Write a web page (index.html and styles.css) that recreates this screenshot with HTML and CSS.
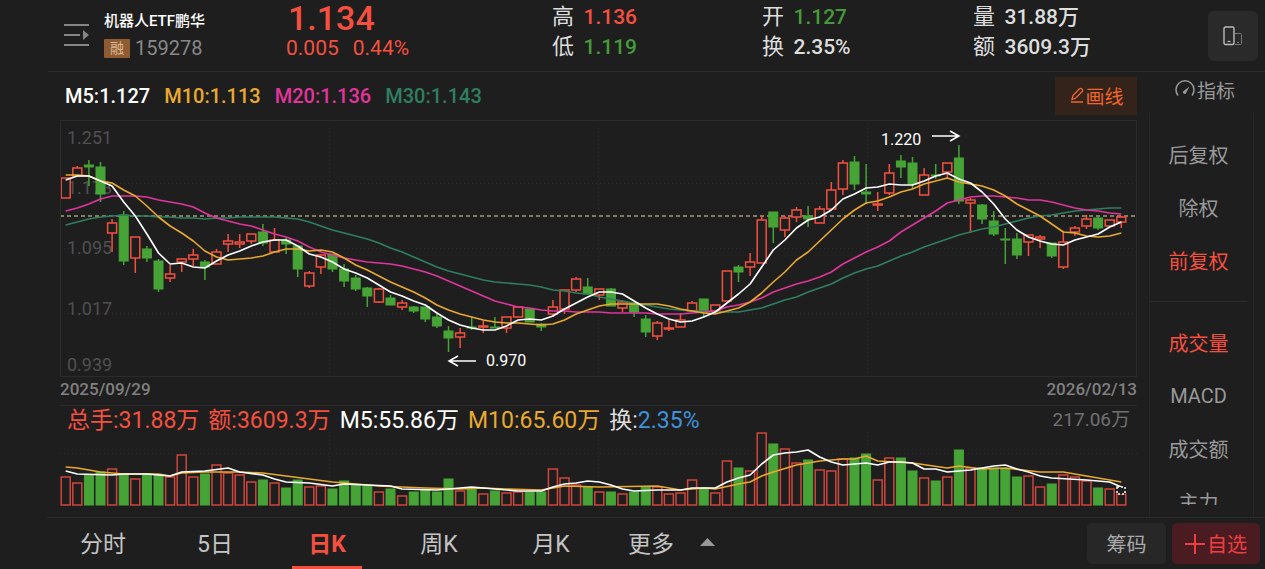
FILE: index.html
```html
<!DOCTYPE html>
<html lang="zh-CN">
  <head>
    <meta charset="UTF-8" />
    <meta name="viewport" content="width=device-width, initial-scale=1.0" />
    <title>机器人ETF鹏华 159278</title>
    <link rel="stylesheet" href="styles.css">
  </head>
  <body>
    <header class="quote">
      <div class="stock">
        <button class="icon-btn" aria-label="列表">
          <svg width="26" height="22" viewBox="0 0 26 22" fill="none" stroke="#858585" stroke-width="2">
            <path d="M0 1h25M0 11h16M0 21h25" />
            <path d="M19 6l6 5-6 5z" fill="#858585" stroke="none" />
          </svg>
        </button>
        <div>
          <h1>机器人ETF鹏华</h1>
          <div class="code"><span class="badge">融</span>159278</div>
        </div>
      </div>
      <div class="price up">
        <div class="last">1.134</div>
        <div class="change"><span>0.005</span><span>0.44%</span></div>
      </div>
      <div class="stat">
        <div>高 <b class="up">1.136</b></div>
        <div>低 <b class="down">1.119</b></div>
      </div>
      <div class="stat">
        <div>开 <b class="down">1.127</b></div>
        <div>换 <b>2.35%</b></div>
      </div>
      <div class="stat">
        <div>量 <b>31.88万</b></div>
        <div>额 <b>3609.3万</b></div>
      </div>
      <button class="rotate-btn" aria-label="切换竖屏">
        <svg width="20" height="20" viewBox="0 0 20 20" fill="none">
          <path d="M12 7.500h5.500a1 1 0 0 1 1 1v9a1 1 0 0 1-1 1H12M14 16.500h2" stroke="#777" />
          <rect x="1" y="1" width="10" height="17.500" rx="1.500" stroke="#bbb" stroke-width="1.400" />
          <path d="M4.500 15.500h3" stroke="#bbb" stroke-width="1.200" />
        </svg>
      </button>
    </header>

    <main>
      <section class="charts">
        <div class="ma-row">
          <span class="m5">M5:1.127</span>
          <span class="m10">M10:1.113</span>
          <span class="m20">M20:1.136</span>
          <span class="m30">M30:1.143</span>
          <button class="draw-btn">
            <svg width="15" height="16" viewBox="0 0 15 16" fill="none" stroke="currentColor" stroke-width="1.300">
              <path d="M2 12.500l.8-3.800L9.500 1.800a1.500 1.500 0 0 1 2.200 0l.5.500a1.500 1.500 0 0 1 0 2.200L5.500 11.300zM1 15h12" />
            </svg>画线
          </button>
        </div>
        <svg id="price-chart" class="panel" viewBox="60 120 1077 257"></svg>
        <div class="dates">
          <span>2025/09/29</span>
          <span>2026/02/13</span>
        </div>
        <div class="volume">
          <div class="volume-row">
            <span class="up">总手:31.88万</span>
            <span class="up">额:3609.3万</span>
            <span class="m5">M5:55.86万</span>
            <span class="m10">M10:65.60万</span>
            <span>换:<span class="rate">2.35%</span></span>
            <span class="volume-max">217.06万</span>
          </div>
          <svg id="volume-chart" viewBox="60 432 1077 74"></svg>
        </div>
      </section>

      <aside class="sidebar">
        <button class="indicator-btn">
          <svg width="22" height="18" viewBox="0 0 22 18" fill="none" stroke="currentColor" stroke-width="1.500">
            <path d="M4 15.500A9 9 0 1 1 18 15.500" />
            <path d="M9.300 11.300L15.500 6.500l-3.700 6.900a1.600 1.600 0 1 1-2.500-2.100z" fill="currentColor" stroke="none" />
          </svg>指标
        </button>
        <div class="indicators">
          <div class="indicator-list">
            <button>后复权</button>
            <button>除权</button>
            <button class="active">前复权</button>
            <hr />
            <button class="active">成交量</button>
            <button>MACD</button>
            <button>成交额</button>
            <button>主力</button>
          </div>
        </div>
      </aside>
    </main>

    <footer>
      <nav class="tabs">
        <button>分时</button>
        <button>5日</button>
        <button class="active">日K</button>
        <button>周K</button>
        <button>月K</button>
        <button class="more">更多
          <svg width="15" height="8" viewBox="0 0 15 8"><path d="M0 8L7.500 0 15 8z" fill="#999" /></svg>
        </button>
      </nav>
      <button class="chip-btn">筹码</button>
      <button class="add-btn">
        <svg width="20" height="20" viewBox="0 0 20 20" stroke="currentColor" stroke-width="2"><path d="M0 10h20M10 0v20" /></svg>自选
      </button>
    </footer>

    <script src="chart.js"></script>
  </body>
</html>
```
FILE: styles.css
```css
* {
  margin: 0;
  padding: 0;
  box-sizing: border-box;
}

body {
  display: flex;
  flex-direction: column;
  min-height: 100vh;
  background-color: #1e1e1e;
  color: #ddd;
  font-family: Roboto, "Noto Sans CJK SC", sans-serif;
  font-size: 20px;
}

button {
  display: flex;
  align-items: center;
  justify-content: center;
  border: none;
  background: none;
  color: inherit;
  font: inherit;
  white-space: nowrap;
  cursor: pointer;
}

svg {
  flex-shrink: 0;
}

.up {
  color: #f5503f;
}

.down {
  color: #459a3a;
}

.m5 {
  color: #fff;
}

.m10 {
  color: #e9a92f;
}

.m20 {
  color: #e0359c;
}

.m30 {
  color: #2f7f5f;
}

/* quote header */
.quote {
  display: grid;
  grid-template-columns: 222fr 266fr 210fr 211fr 235fr 50px;
  height: 72px;
  padding: 0 7px 0 16px;
  margin-left: 48px;
  border-bottom: 1px solid #2b2b2b;
}

.stock {
  display: flex;
  gap: 14px;
  padding-top: 11px;
}

.icon-btn {
  height: 48px;
}

h1 {
  font-size: 15px;
  font-weight: 500;
  line-height: 20px;
  color: #fff;
  white-space: nowrap;
}

.code {
  display: flex;
  align-items: center;
  gap: 5px;
  margin-top: 5px;
  line-height: 24px;
  color: #888;
}

.badge {
  width: 26px;
  border-radius: 1px;
  background-color: #8f5b33;
  color: #dcb794;
  font-size: 14px;
  line-height: 19px;
  text-align: center;
}

.last {
  padding-left: 2px;
  font-size: 34px;
  font-weight: 500;
  line-height: 36px;
}

.change {
  display: flex;
  gap: 14px;
  font-size: 21px;
  line-height: 24px;
}

.stat {
  padding-top: 2px;
  font-size: 22px;
  line-height: 30px;
  white-space: nowrap;
}

.stat b {
  margin-left: 4px;
  font-size: 21px;
  font-weight: 500;
}

.rotate-btn {
  height: 50px;
  margin-top: 11px;
  border-radius: 6px;
  background-color: #2a2a2a;
}

/* charts */
main {
  display: flex;
  flex: 1;
}

.charts {
  flex: 1;
  min-width: 0;
  padding-left: 60px;
}

.ma-row {
  display: flex;
  align-items: center;
  gap: 14px;
  height: 48px;
  padding-left: 5px;
  font-weight: 500;
}

.draw-btn {
  width: 82px;
  height: 38px;
  padding: 0 0 2px 2px;
  margin-left: auto;
  background-color: #33231a;
  color: #f0662b;
  font-size: 19px;
  font-weight: 400;
}

.charts svg {
  display: block;
}

.charts > svg,
.volume > svg {
  width: 100%;
  height: auto;
}

.panel {
  outline: 1px solid #2b2b2b;
  outline-offset: -1px;
}

.dates {
  display: flex;
  justify-content: space-between;
  height: 28px;
  font-size: 17px;
  font-weight: 500;
  line-height: 24px;
  color: #808080;
}

.volume {
  margin-bottom: 11px;
  border-top: 1px solid #2b2b2b;
}

.volume-row {
  display: flex;
  gap: 9px;
  height: 26px;
  padding: 3px 7px 0;
  font-size: 23px;
  line-height: 24px;
  white-space: nowrap;
}

.rate {
  color: #3f92dc;
}

.volume-max {
  margin-left: auto;
  font-size: 19px;
  line-height: 22px;
  color: #707070;
}

.axis {
  font-size: 18px;
  fill: #505050;
}

.mark {
  font-size: 16px;
  fill: #fff;
}

.grid {
  stroke: #2a2a2a;
  stroke-dasharray: 1 3;
}

.last-line {
  stroke: #a39a78;
  stroke-width: 1.5;
  stroke-dasharray: 4 3;
}

.rise {
  stroke: #f5503f;
  stroke-width: 1.5;
}

.rise rect {
  fill: #1e1e1e;
}

.volume .rise {
  stroke: #cf463d;
}

.fall {
  stroke: #46a436;
  fill: #46a436;
}

.line {
  fill: none;
  stroke: currentColor;
  stroke-width: 1.6;
  stroke-linejoin: round;
}

.arrow {
  fill: none;
  stroke: #fff;
  stroke-width: 1.5;
}

.estimate {
  fill: #1e1e1e;
  stroke: #fff;
  stroke-width: 1.5;
  stroke-dasharray: 2 2;
}

/* sidebar */
.sidebar {
  display: flex;
  flex-direction: column;
  width: 105px;
  margin: 0 11px 0 12px;
  color: #999;
}

.indicator-btn {
  height: 38px;
  margin-bottom: 3px;
  padding: 0 0 4px 6px;
  font-size: 19px;
  gap: 1px;
}

.indicators {
  display: flex;
  flex: 1;
  padding-bottom: 12px;
  border: 1px solid #262626;
  border-width: 0 1px;
}

.indicator-list {
  flex: 1;
  padding: 15px 6px 0 0;
  overflow: hidden;
  contain: size;
}

.indicator-list button {
  width: 100%;
  height: 53px;
}

.indicator-list hr {
  margin: 14px 0;
  border: none;
  border-top: 1px solid #2b2b2b;
}

.sidebar .active {
  color: #f5503f;
}

/* bottom bar */
footer {
  display: flex;
  align-items: center;
  gap: 6px;
  height: 52px;
  padding-right: 5px;
  margin-left: 47px;
  border-top: 1px solid #2b2b2b;
}

.tabs {
  display: flex;
  flex: 1;
  height: 100%;
  font-size: 23px;
  color: #c4c4c4;
}

.tabs button {
  position: relative;
  width: 112px;
  padding-bottom: 3px;
}

.tabs .active {
  color: #f5503f;
  font-weight: 700;
}

.tabs .active::after {
  content: "";
  position: absolute;
  bottom: 0;
  left: 21px;
  right: 21px;
  height: 3px;
  background-color: #f5503f;
}

.tabs .more {
  gap: 26px;
  width: auto;
  padding-left: 21px;
}

.chip-btn,
.add-btn {
  height: 41px;
  border-radius: 5px;
}

.chip-btn {
  width: 79px;
  background-color: #272727;
  color: #aaa;
}

.add-btn {
  gap: 2px;
  width: 88px;
  background-color: #4a1c22;
  color: #f23d40;
}
```
FILE: chart.js
```js
const FIRST_X = 65.7;
const STEP = 11.6;
const VOLUME_BASE = 505;

// [direction, body top, body bottom, high, low, volume top], in chart units
const days = [
  ["r", 178, 198, 178, 198, 477], ["r", 168, 176, 166, 176, 483], ["g", 165, 167, 160, 186, 475],
  ["g", 167, 194, 162, 202, 472], ["r", 223, 233, 219, 252, 469], ["g", 215, 261, 211, 265, 474],
  ["r", 237, 258, 237, 273, 479], ["g", 249, 258, 246, 262, 474], ["g", 261, 289, 259, 292, 475],
  ["r", 274, 278, 265, 282, 477], ["r", 259, 262, 258, 272, 455], ["r", 255, 259, 249, 266, 477],
  ["g", 262, 267, 260, 280, 474], ["r", 252, 264, 249, 264, 465], ["r", 241, 244, 234, 252, 473],
  ["r", 242, 244, 234, 248, 475], ["r", 234, 241, 234, 244, 482], ["g", 232, 243, 224, 246, 480],
  ["r", 240, 252, 228, 252, 483], ["g", 240, 244, 237, 254, 488], ["g", 246, 269, 246, 277, 480],
  ["r", 273, 286, 271, 288, 487], ["r", 255, 267, 254, 274, 486], ["g", 254, 269, 254, 272, 489],
  ["g", 269, 281, 264, 287, 481], ["g", 278, 289, 275, 291, 485], ["g", 288, 296, 287, 307, 486],
  ["r", 289, 302, 288, 303, 492], ["g", 298, 305, 295, 305, 489], ["r", 303, 307, 300, 310, 496],
  ["g", 307, 311, 306, 313, 492], ["g", 307, 319, 307, 322, 490], ["g", 317, 326, 314, 328, 492],
  ["g", 331, 338, 326, 352, 479], ["r", 333, 337, 328, 348, 491], ["g", 327, 328, 317, 330, 489],
  ["r", 326, 327, 321, 333, 494], ["g", 327, 328, 317, 328, 491], ["r", 317, 328, 317, 333, 493],
  ["r", 307, 317, 307, 317, 492], ["g", 309, 322, 309, 322, 492], ["g", 324, 327, 323, 331, 492],
  ["r", 307, 314, 300, 317, 469], ["r", 290, 309, 290, 314, 478], ["r", 279, 290, 277, 292, 485],
  ["g", 287, 294, 278, 294, 487], ["r", 289, 295, 289, 300, 492], ["g", 289, 306, 288, 306, 492],
  ["r", 302, 308, 300, 312, 494], ["g", 303, 312, 303, 317, 492], ["g", 319, 332, 315, 337, 487],
  ["r", 323, 336, 321, 340, 487], ["r", 328, 329, 320, 331, 494], ["r", 320, 327, 313, 327, 493],
  ["r", 303, 311, 301, 311, 480], ["g", 299, 312, 299, 317, 489], ["r", 305, 311, 305, 311, 493],
  ["r", 271, 301, 271, 301, 461], ["g", 267, 272, 265, 282, 468], ["r", 262, 267, 253, 276, 471],
  ["r", 220, 263, 216, 263, 433], ["g", 212, 227, 212, 243, 444], ["r", 218, 230, 216, 237, 449],
  ["r", 210, 217, 207, 222, 463], ["g", 216, 219, 206, 227, 460], ["r", 209, 223, 206, 223, 470],
  ["r", 190, 209, 182, 209, 471], ["r", 163, 189, 160, 195, 459], ["g", 162, 184, 156, 190, 458],
  ["g", 192, 194, 164, 204, 454], ["r", 204, 205, 192, 211, 480], ["r", 173, 193, 164, 195, 458],
  ["g", 161, 167, 155, 178, 458], ["g", 163, 184, 157, 189, 471], ["r", 175, 195, 168, 195, 478],
  ["g", 175, 176, 164, 179, 481], ["r", 163, 172, 163, 178, 477], ["g", 158, 201, 145, 204, 450],
  ["r", 200, 203, 198, 233, 468], ["g", 205, 219, 204, 224, 468], ["g", 221, 234, 211, 236, 468],
  ["g", 239, 240, 228, 264, 469], ["g", 239, 255, 233, 259, 477], ["r", 235, 242, 235, 256, 476],
  ["r", 237, 239, 235, 248, 487], ["g", 243, 256, 243, 258, 484], ["r", 242, 267, 231, 269, 475],
  ["r", 228, 232, 226, 236, 477], ["r", 219, 226, 215, 229, 481], ["g", 218, 228, 217, 230, 488],
  ["r", 220, 226, 220, 227, 489], ["r", 217, 222, 216, 228, 494],
];

const ma5 = [
  180, 176, 176, 181, 186, 202, 216, 234, 253, 264, 263, 267, 268, 261, 255, 251, 246, 242, 240, 240,
  246, 254, 257, 262, 269, 273, 278, 285, 292, 296, 301, 305, 313, 320, 325, 328, 330, 330, 326, 320,
  319, 320, 316, 309, 303, 297, 292, 292, 294, 301, 308, 314, 319, 322, 321, 317, 312, 303, 294, 284,
  267, 250, 240, 228, 220, 217, 210, 199, 194, 188, 187, 184, 185, 185, 181, 176, 173, 179, 183, 192,
  204, 219, 230, 237, 241, 244, 245, 240, 237, 234, 227, 222,
];

const ma10 = [
  175, 175, 176, 181, 183, 190, 196, 206, 217, 226, 233, 241, 251, 257, 260, 259, 258, 256, 252, 249,
  249, 251, 250, 252, 258, 265, 270, 276, 282, 287, 292, 298, 305, 310, 314, 317, 320, 322, 323, 323,
  324, 325, 324, 320, 314, 310, 306, 304, 304, 304, 304, 304, 306, 309, 311, 313, 314, 311, 308, 302,
  293, 282, 272, 260, 252, 241, 230, 219, 210, 203, 201, 197, 192, 189, 184, 181, 178, 182, 184, 186,
  190, 196, 204, 210, 216, 224, 232, 233, 236, 237, 236, 233,
];

const ma20 = [
  211, 208, 204, 199, 196, 196, 196, 197, 200, 202, 204, 207, 213, 218, 221, 224, 226, 230, 234, 237,
  241, 247, 252, 255, 258, 260, 262, 263, 264, 266, 269, 272, 276, 281, 286, 291, 296, 301, 304, 307,
  308, 310, 311, 311, 312, 312, 312, 313, 313, 313, 313, 314, 314, 314, 313, 312, 311, 307, 305, 302,
  298, 292, 288, 284, 281, 277, 272, 264, 258, 252, 247, 241, 232, 225, 218, 211, 203, 200, 197, 196,
  196, 197, 198, 200, 200, 202, 205, 208, 210, 211, 213, 214,
];

const ma30 = [
  225, 222, 219, 217, 216, 215, 216, 216, 217, 217, 218, 218, 219, 218, 218, 217, 217, 217, 217, 218,
  219, 222, 226, 230, 233, 236, 239, 243, 248, 252, 257, 262, 267, 271, 274, 277, 280, 282, 283, 284,
  285, 287, 290, 291, 293, 294, 297, 299, 301, 303, 305, 307, 309, 310, 311, 311, 312, 312, 312, 310,
  308, 304, 300, 297, 292, 288, 284, 278, 273, 269, 266, 261, 256, 252, 247, 243, 239, 235, 232, 229,
  227, 224, 221, 218, 216, 215, 213, 211, 210, 209, 208, 208,
];

// volume averages as [day, y] pairs
const volMa5 = [
  [0, 471], [1, 474], [4, 475], [5, 474], [7, 474], [9, 476], [10, 472], [12, 471], [14, 468], [15, 472],
  [17, 475], [18, 479], [19, 482], [21, 483], [23, 486], [24, 484], [26, 485], [28, 486], [29, 489],
  [32, 490], [33, 489], [35, 487], [37, 489], [39, 491], [41, 491], [42, 487], [43, 484], [44, 483],
  [45, 481], [46, 482], [47, 485], [48, 489], [49, 491], [51, 490], [53, 490], [54, 488], [56, 488],
  [57, 482], [58, 478], [59, 475], [60, 464], [61, 455], [62, 453], [63, 452], [64, 450], [65, 457],
  [66, 462], [67, 465], [69, 463], [70, 465], [71, 462], [72, 462], [73, 463], [74, 469], [75, 469],
  [76, 472], [78, 470], [80, 466], [81, 465], [82, 469], [83, 472], [84, 476], [85, 478], [88, 480],
  [90, 482], [91, 487],
];

const volMa10 = [
  [0, 467], [1, 468], [2, 470], [3, 472], [5, 474], [8, 474], [9, 476], [10, 473], [12, 472], [15, 472],
  [17, 473], [19, 476], [21, 479], [23, 482], [25, 484], [27, 486], [31, 488], [34, 489], [36, 488],
  [38, 489], [41, 490], [43, 486], [46, 487], [51, 486], [53, 490], [55, 488], [56, 489], [58, 484],
  [59, 482], [60, 476], [61, 472], [63, 465], [65, 461], [67, 459], [68, 459], [69, 456], [70, 461],
  [73, 463], [76, 468], [77, 466], [79, 469], [81, 468], [84, 472], [86, 472], [88, 476], [91, 482],
];

const dayX = (i) => FIRST_X + i * STEP;

function bar(x, top, bottom) {
  return `<rect x="${x - 4.5}" y="${top}" width="9" height="${bottom - top}" />`;
}

function line(points, name) {
  const path = points.map(([i, y]) => `${dayX(i).toFixed(1)},${y}`).join(" ");
  return `<polyline class="line ${name}" points="${path}" />`;
}

function grid(top, bottom, rows) {
  const cols = [329, 598, 867].map((x) => `<path class="grid" d="M${x}.5 ${top}V${bottom}" />`);
  const lines = rows.map((y) => `<path class="grid" d="M60 ${y}.5H1137" />`);
  return cols.concat(lines).join("");
}

function drawPrice() {
  const labels = [["1.251", 144], ["1.173", 194], ["1.095", 254], ["1.017", 315], ["0.939", 371]];
  let out = grid(120, 377, [183, 248, 313]);

  out += labels.map(([text, y]) => `<text class="axis" x="67" y="${y}">${text}</text>`).join("");
  out += '<path class="last-line" d="M60 216H1137" />';

  days.forEach(([dir, top, bottom, high, low], i) => {
    const x = dayX(i);
    out += `<g class="${dir === "r" ? "rise" : "fall"}">
      <path d="M${x} ${high}V${low}" stroke-width="1.5" />${bar(x, top, bottom)}</g>`;
  });

  const indexed = (values) => values.map((y, i) => [i, y]);
  out += line(indexed(ma30), "m30") + line(indexed(ma20), "m20");
  out += line(indexed(ma10), "m10") + line(indexed(ma5), "m5");

  out += `<text class="mark" x="881" y="145">1.220</text>
    <path class="arrow" d="M932 136H958M950 131L959 136 950 141" />
    <text class="mark" x="486" y="366">0.970</text>
    <path class="arrow" d="M476 361H450M458 356L449 361 458 366" />`;
  document.getElementById("price-chart").innerHTML = out;
}

function drawVolume() {
  let out = grid(432, 505, [453]);
  days.forEach((day, i) => {
    out += `<g class="${day[0] === "r" ? "rise" : "fall"}">${bar(dayX(i), day[5], VOLUME_BASE)}</g>`;
  });
  out += line(volMa10, "m10") + line(volMa5, "m5");
  out += '<rect class="estimate" x="1117" y="487" width="8" height="7" />';
  document.getElementById("volume-chart").innerHTML = out;
}

drawPrice();
drawVolume();
```
